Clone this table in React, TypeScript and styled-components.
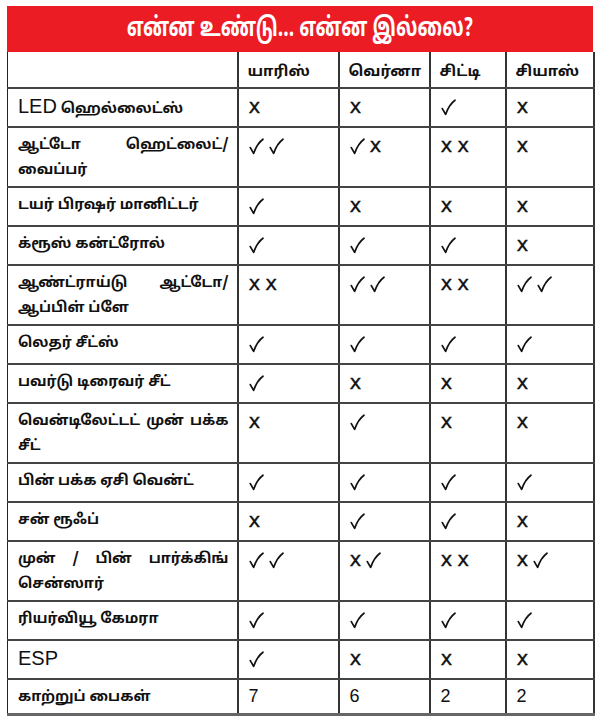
import React from "react";
import styled, { createGlobalStyle } from "styled-components";

const GlobalStyle = createGlobalStyle`
  html, body {
    margin: 0;
    padding: 0;
    background: #ffffff;
  }
  body {
    font-family: "Noto Sans Tamil", "Lohit Tamil", "Noto Sans", "Liberation Sans", sans-serif;
    color: #111;
  }
`;

type Mark = "y" | "n" | string;

type Row = {
  label: string | [string, string];
  values: Mark[][];
  tall?: boolean;
  last?: boolean;
};

const cars = ["யாரிஸ்", "வெர்னா", "சிட்டி", "சியாஸ்"];

const rows: Row[] = [
  { label: "LED ஹெல்லைட்ஸ்", values: [["n"], ["n"], ["y"], ["n"]] },
  {
    label: ["ஆட்டோ ஹெட்லைட்/", "வைப்பர்"],
    values: [["y", "y"], ["y", "n"], ["n", "n"], ["n"]],
    tall: true,
  },
  { label: "டயர் பிரஷர் மானிட்டர்", values: [["y"], ["n"], ["n"], ["n"]] },
  { label: "க்ரூஸ் கன்ட்ரோல்", values: [["y"], ["y"], ["y"], ["n"]] },
  {
    label: ["ஆண்ட்ராய்டு ஆட்டோ/", "ஆப்பிள் ப்ளே"],
    values: [["n", "n"], ["y", "y"], ["n", "n"], ["y", "y"]],
    tall: true,
  },
  { label: "லெதர் சீட்ஸ்", values: [["y"], ["y"], ["y"], ["y"]] },
  { label: "பவர்டு டிரைவர் சீட்", values: [["y"], ["n"], ["n"], ["n"]] },
  {
    label: ["வென்டிலேட்டட் முன் பக்க", "சீட்"],
    values: [["n"], ["y"], ["n"], ["n"]],
    tall: true,
  },
  { label: "பின் பக்க ஏசி வென்ட்", values: [["y"], ["y"], ["y"], ["y"]] },
  { label: "சன் ரூஃப்", values: [["n"], ["y"], ["y"], ["n"]] },
  {
    label: ["முன் / பின் பார்க்கிங்", "சென்ஸார்"],
    values: [["y", "y"], ["n", "y"], ["n", "n"], ["n", "y"]],
    tall: true,
  },
  { label: "ரியர்வியூ கேமரா", values: [["y"], ["y"], ["y"], ["y"]] },
  { label: "ESP", values: [["y"], ["n"], ["n"], ["n"]] },
  { label: "காற்றுப் பைகள்", values: [["7"], ["6"], ["2"], ["2"]], last: true },
];

const Page = styled.div`
  padding: 6px 7px 0 7px;
  width: 586px;
`;

const Banner = styled.div`
  height: 46px;
  background: #ec1c24;
  display: flex;
  align-items: center;
  justify-content: center;
  overflow: hidden;
`;

const BannerText = styled.span`
  display: inline-block;
  color: #ffffff;
  font-size: 26px;
  font-weight: 700;
  transform: scaleX(0.74);
  white-space: nowrap;
`;

const Table = styled.table`
  width: 586px;
  border-collapse: collapse;
  table-layout: fixed;
  border-left: 1px solid #222;
  border-right: 2px solid #333;
  border-bottom: 3px solid #666;
`;

const Col = styled.col<{ $w: number }>`
  width: ${(p) => p.$w}px;
`;

const HeadRow = styled.tr`
  height: 36px;
`;

const HeadCell = styled.th`
  padding: 5px 0 0 9px;
  text-align: left;
  vertical-align: middle;
  font-size: 15px;
  font-weight: 700;
  white-space: nowrap;
  border-left: 2px solid #333;
  border-bottom: 2px solid #444;
  &:first-child {
    border-left: none;
  }
`;

const BodyRow = styled.tr<{ $tall?: boolean; $last?: boolean }>`
  height: ${(p) => (p.$tall ? 60 : p.$last ? 26 : 39)}px;
`;

const LabelCell = styled.td`
  padding: 5px 8px 3px 10px;
  vertical-align: top;
  font-size: 14.5px;
  font-weight: 700;
  line-height: 25px;
  white-space: nowrap;
  border-bottom: 2px solid #444;
`;

const Line = styled.span<{ $spread?: boolean }>`
  display: block;
  white-space: nowrap;
  text-align: ${(p) => (p.$spread ? "justify" : "left")};
  text-align-last: ${(p) => (p.$spread ? "justify" : "left")};
`;

const Latin = styled.span`
  font-family: "Liberation Sans", Arial, sans-serif;
  font-weight: 400;
  font-size: 20px;
`;

const ValueCell = styled.td`
  padding: 5px 0 0 10px;
  vertical-align: top;
  border-left: 2px solid #333;
  border-bottom: 2px solid #444;
  white-space: nowrap;
`;

const MarkRow = styled.div`
  display: flex;
  align-items: center;
  height: 26px;
  gap: 5px;
`;

const Tick = styled.svg`
  width: 15px;
  height: 17px;
  flex: none;
`;

const No = styled.span`
  display: inline-block;
  font-family: "DejaVu Sans", sans-serif;
  font-size: 20px;
  line-height: 24px;
  color: #111;
  -webkit-text-stroke: 0.35px #111;
  margin-top: -2px;
`;

const Count = styled.span`
  font-family: "Liberation Sans", Arial, sans-serif;
  font-size: 18px;
  line-height: 18px;
  margin-top: -4px;
`;

const Yes = () => (
  <Tick viewBox="0 0 15 17" aria-label="ஆம்">
    <path
      d="M1.3 9.6 L4.6 15.4 C6.6 9.6 9.6 4.4 14 1.2"
      fill="none"
      stroke="#111"
      strokeWidth="1.7"
      strokeLinecap="round"
      strokeLinejoin="round"
    />
  </Tick>
);

function renderLabel(label: string | [string, string]) {
  if (Array.isArray(label)) {
    return (
      <>
        <Line $spread>{label[0]}</Line>
        <Line>{label[1]}</Line>
      </>
    );
  }
  if (label.startsWith("LED ")) {
    return (
      <>
        <Latin>LED</Latin> {label.slice(4)}
      </>
    );
  }
  if (label === "ESP") return <Latin>ESP</Latin>;
  return label;
}

function renderMark(m: Mark, i: number) {
  if (m === "y") return <Yes key={i} />;
  if (m === "n") return <No key={i}>x</No>;
  return <Count key={i}>{m}</Count>;
}

export default function App() {
  return (
    <>
      <GlobalStyle />
      <Page>
        <Banner>
          <BannerText>என்ன உண்டு... என்ன இல்லை?</BannerText>
        </Banner>
        <Table>
          <colgroup>
            <Col $w={230} />
            <Col $w={101} />
            <Col $w={91} />
            <Col $w={76} />
            <Col $w={88} />
          </colgroup>
          <thead>
            <HeadRow>
              <HeadCell />
              {cars.map((c) => (
                <HeadCell key={c}>{c}</HeadCell>
              ))}
            </HeadRow>
          </thead>
          <tbody>
            {rows.map((r) => (
              <BodyRow key={String(r.label)} $tall={r.tall} $last={r.last}>
                <LabelCell>{renderLabel(r.label)}</LabelCell>
                {r.values.map((v, i) => (
                  <ValueCell key={i}>
                    <MarkRow>{v.map(renderMark)}</MarkRow>
                  </ValueCell>
                ))}
              </BodyRow>
            ))}
          </tbody>
        </Table>
      </Page>
    </>
  );
}
